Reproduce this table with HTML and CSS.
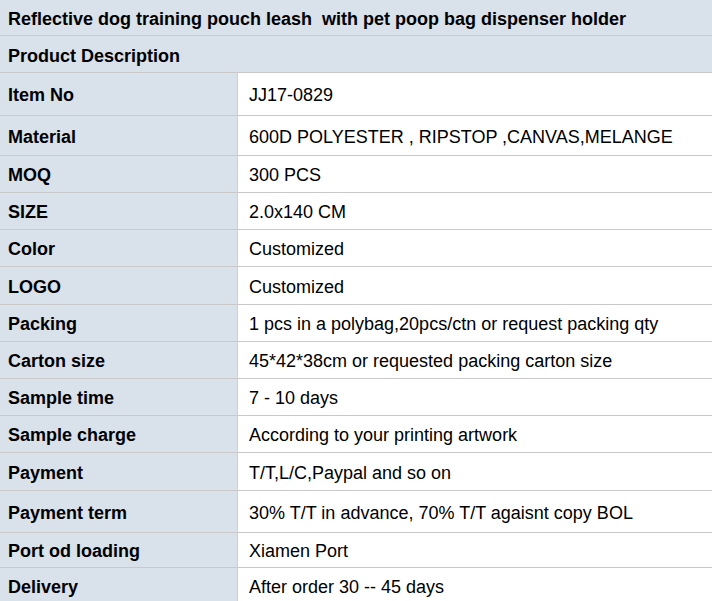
FILE: index.html
```html
<!DOCTYPE html>
<html>
<head>
<meta charset="utf-8">
<link rel="stylesheet" href="styles.css">
</head>
<body>
<div class="spec">
  <div class="row full h36"><div class="cell head">Reflective dog training pouch leash&nbsp; with pet poop bag dispenser holder</div></div>
  <div class="row full h37"><div class="cell head head-sub">Product Description</div></div>
  <div class="row h43"><div class="cell label">Item No</div><div class="cell value">JJ17-0829</div></div>
  <div class="row h40"><div class="cell label">Material</div><div class="cell value">600D POLYESTER , RIPSTOP ,CANVAS,MELANGE</div></div>
  <div class="row h37"><div class="cell label">MOQ</div><div class="cell value">300 PCS</div></div>
  <div class="row h37"><div class="cell label">SIZE</div><div class="cell value">2.0x140 CM</div></div>
  <div class="row h37"><div class="cell label">Color</div><div class="cell value">Customized</div></div>
  <div class="row h38"><div class="cell label">LOGO</div><div class="cell value">Customized</div></div>
  <div class="row h37"><div class="cell label">Packing</div><div class="cell value">1 pcs in a polybag,20pcs/ctn or request packing qty</div></div>
  <div class="row h37"><div class="cell label">Carton size</div><div class="cell value">45*42*38cm or requested packing carton size</div></div>
  <div class="row h37"><div class="cell label">Sample time</div><div class="cell value">7 - 10 days</div></div>
  <div class="row h37"><div class="cell label">Sample charge</div><div class="cell value">According to your printing artwork</div></div>
  <div class="row h38"><div class="cell label">Payment</div><div class="cell value">T/T,L/C,Paypal and so on</div></div>
  <div class="row h42"><div class="cell label">Payment term</div><div class="cell value">30% T/T in advance, 70% T/T agaisnt copy BOL</div></div>
  <div class="row h35"><div class="cell label">Port od loading</div><div class="cell value">Xiamen Port</div></div>
  <div class="row h37"><div class="cell label">Delivery</div><div class="cell value">After order 30 -- 45 days</div></div>
</div>
</body>
</html>
```
FILE: styles.css
```css
html, body {
  margin: 0;
  padding: 0;
  background: #ffffff;
}
body {
  font-family: "Liberation Sans", Arial, sans-serif;
  font-size: 18px;
  color: #000;
  overflow: hidden;
}
.spec {
  width: 712px;
}
.row {
  display: grid;
  grid-template-columns: 237px 1fr;
  box-sizing: border-box;
  border-bottom: 1px solid #c9c9c9;
}
.row.full {
  grid-template-columns: 1fr;
  background: #d9e1eb;
}
.h35 { height: 35px; }
.h36 { height: 36px; }
.h37 { height: 37px; }
.h38 { height: 38px; }
.h40 { height: 40px; }
.h42 { height: 42px; }
.h43 { height: 43px; }
.cell {
  display: flex;
  align-items: center;
  box-sizing: border-box;
  white-space: nowrap;
  padding-top: 3px;
}
.head {
  font-weight: bold;
  padding-left: 8px;
}
.head-sub {
  padding-top: 4px;
}
.label {
  background: #d9e1eb;
  font-weight: bold;
  padding-left: 8px;
}
.value {
  background: #fff;
  border-left: 1px solid #cfcfcf;
  padding-left: 11px;
}
```
